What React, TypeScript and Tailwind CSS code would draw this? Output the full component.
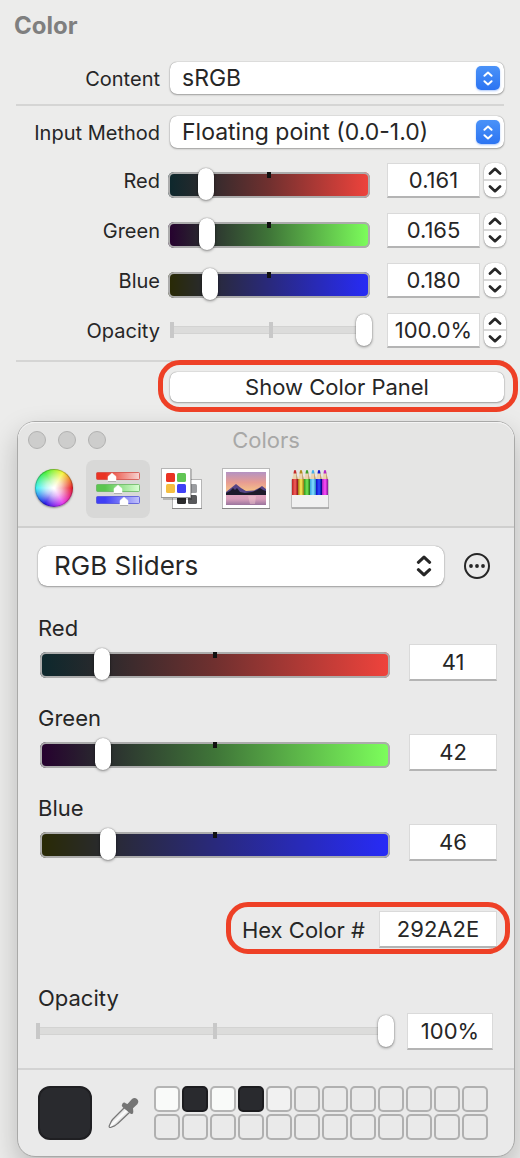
import { useState } from "react";
import type { ReactNode } from "react";

const TRACKS = {
  red: "[&::-webkit-slider-runnable-track]:bg-[linear-gradient(to_right,#0c282d,#29292c_17%,#70302f_50%,#f0433c)]",
  green: "[&::-webkit-slider-runnable-track]:bg-[linear-gradient(to_right,#26002f,#29292e_17%,#3f7538_50%,#7dff5c)]",
  blue: "[&::-webkit-slider-runnable-track]:bg-[linear-gradient(to_right,#292a04,#292a2e_18%,#29297c_50%,#272bf8)]",
};

const THUMB =
  "[&::-webkit-slider-thumb]:h-8 [&::-webkit-slider-thumb]:w-4 [&::-webkit-slider-thumb]:appearance-none [&::-webkit-slider-thumb]:rounded-full [&::-webkit-slider-thumb]:bg-white [&::-webkit-slider-thumb]:shadow-[0_0_1px_rgba(0,0,0,0.5),0_1px_3px_rgba(0,0,0,0.4)]";

type Hue = keyof typeof TRACKS;

function ColorSlider({ id, hue, max, step, value, onChange }: {
  id: string; hue: Hue; max: number; step: number; value: number; onChange: (v: number) => void;
}) {
  return (
    <div className="relative h-8 min-w-0 flex-1">
      <span className="absolute top-1 left-1/2 z-10 h-1.5 w-1 -translate-x-1/2 bg-[#111]" />
      <input
        id={id}
        type="range"
        min={0}
        max={max}
        step={step}
        value={value}
        onChange={(e) => onChange(Number(e.target.value))}
        className={`block h-[34px] w-full appearance-none bg-transparent [&::-webkit-slider-runnable-track]:h-[26px] [&::-webkit-slider-runnable-track]:rounded-md [&::-webkit-slider-runnable-track]:shadow-[inset_0_0_0_2px_#acacac] [&::-webkit-slider-thumb]:-mt-1 ${THUMB} ${TRACKS[hue]}`}
      />
    </div>
  );
}

function OpacitySlider({ id, value, onChange }: { id: string; value: number; onChange: (v: number) => void }) {
  return (
    <div className="relative h-8 min-w-0 flex-1">
      <span className="absolute inset-x-0 top-3 h-2 border-y border-[#d3d3d2] bg-[#dcdcdb]" />
      <span className="absolute top-2 left-0 h-4 w-1 bg-[#c8c8c8]" />
      <span className="absolute top-2 left-1/2 h-4 w-1 -translate-x-1/2 bg-[#c8c8c8]" />
      <input
        id={id}
        type="range"
        min={0}
        max={100}
        value={value}
        onChange={(e) => onChange(Number(e.target.value))}
        className={`relative block h-8 w-full appearance-none bg-transparent ${THUMB}`}
      />
    </div>
  );
}

function Field({ label, value, className }: { label: string; value: string; className: string }) {
  return (
    <input
      type="text"
      aria-label={label}
      value={value}
      readOnly
      className={`shrink-0 border border-b-2 border-[#dadada] border-b-[#b4b4b4] bg-white text-center text-[22px] text-[#262626] outline-none ${className}`}
    />
  );
}

function Chevron({ up, className }: { up?: boolean; className: string }) {
  return (
    <svg viewBox="0 0 14 8" className={className} fill="none" stroke="currentColor" strokeWidth="2.700" strokeLinecap="round" strokeLinejoin="round" aria-hidden="true">
      <path d={up ? "M2 6.5 7 1.8l5 4.7" : "M2 1.5l5 4.7 5-4.7"} />
    </svg>
  );
}

function Stepper({ label, onStep }: { label: string; onStep: (d: number) => void }) {
  return (
    <div className="ml-1 flex h-[34px] w-[22px] shrink-0 flex-col rounded-lg bg-white text-[#262626] shadow-[0_0_1px_rgba(0,0,0,0.4),0_1px_2px_rgba(0,0,0,0.3)]">
      <button type="button" aria-label={`Increase ${label}`} onClick={() => onStep(1)} className="flex flex-1 items-center justify-center border-b-2 border-[#d9d9d9]">
        <Chevron up className="h-2 w-3.5" />
      </button>
      <button type="button" aria-label={`Decrease ${label}`} onClick={() => onStep(-1)} className="flex flex-1 items-center justify-center">
        <Chevron className="h-2 w-3.5" />
      </button>
    </div>
  );
}

function PopUp({ id, options }: { id: string; options: string[] }) {
  return (
    <div className="relative min-w-0 flex-1">
      <select id={id} className="block h-8 w-full appearance-none rounded-[7px] bg-white pl-3 text-[23px] leading-8 text-[#262626] shadow-[0_0_1px_rgba(0,0,0,0.5),0_1px_2px_rgba(0,0,0,0.3)]">
        {options.map((o) => <option key={o}>{o}</option>)}
      </select>
      <span className="pointer-events-none absolute top-1 right-1 flex size-6 flex-col items-center justify-center gap-[3px] rounded-[5px] bg-linear-to-b from-[#4a92f8] to-[#2c74f2] text-white shadow-[0_1px_2px_rgba(44,116,242,0.4)]">
        <Chevron up className="h-1.5 w-2.5" />
        <Chevron className="h-1.5 w-2.5" />
      </span>
    </div>
  );
}

function FormRow({ id, label, className = "", children }: { id: string; label: string; className?: string; children: ReactNode }) {
  return (
    <div className={`flex items-center ${className}`}>
      <label htmlFor={id} className="w-36 shrink-0 pt-0.5 text-right text-xl leading-6">{label}</label>
      {children}
    </div>
  );
}

function WheelIcon() {
  return (
    <span className="relative mb-0.5 block size-[38px] rounded-full bg-[conic-gradient(from_90deg,#e8202c,#e53cf0,#2a1ce8,#3ff0f5,#46f03c,#f6f53c,#e8202c)] shadow-[0_1px_2px_rgba(0,0,0,0.4)]">
      <span className="absolute inset-0 rounded-full border border-black/25 bg-[radial-gradient(closest-side,white_5%,rgba(255,255,255,0.65)_45%,transparent_98%)]" />
    </span>
  );
}

function SlidersIcon() {
  const bars = [
    { y: 12, x: 26, a: "#ea3323", b: "#f6d5d3", s: "#d2463d" },
    { y: 24, x: 32, a: "#5bc650", b: "#daffd4", s: "#62b45b" },
    { y: 36, x: 38, a: "#3f3ff5", b: "#c3c3fa", s: "#4b4bd8" },
  ];
  return (
    <svg viewBox="0 0 64 58" className="h-[58px] w-16" aria-hidden="true">
      {bars.map((b, i) => (
        <g key={b.y}>
          <linearGradient id={`bar${i}`}>
            <stop offset="0.2" stopColor={b.a} />
            <stop offset="1" stopColor={b.b} />
          </linearGradient>
          <rect x="10.5" y={b.y + 0.5} width="43" height="7" rx="1" fill={`url(#bar${i})`} stroke={b.s} strokeOpacity="0.75" />
          <path d={`M${b.x - 4} ${b.y + 10}v-5l4-4 4 4v5z`} fill="#000" opacity="0.3" />
          <path d={`M${b.x - 4} ${b.y + 9}v-4.500l4-3.500 4 3.500v4.500z`} fill="#fff" stroke="#fff" strokeWidth="0.5" strokeLinejoin="round" />
        </g>
      ))}
    </svg>
  );
}

function PalettesIcon() {
  return (
    <svg viewBox="0 0 64 58" className="h-[58px] w-16" aria-hidden="true">
      <rect x="22.500" y="19.500" width="29" height="29" fill="#fff" stroke="#b5b5b5" />
      <path d="M22 48.500h30" stroke="#888" />
      <rect x="38" y="24" width="9" height="9" rx="1.500" fill="#9b9da0" />
      <rect x="27" y="35" width="9" height="9" rx="1.500" fill="#2c2c2c" />
      <rect x="38" y="35" width="9" height="9" rx="1.500" fill="#58595b" />
      <path d="M13 9h29v31H13z" fill="#000" opacity="0.2" />
      <rect x="11.500" y="8.500" width="29" height="29" fill="#fff" stroke="#b5b5b5" />
      <path d="M11 37.500h30" stroke="#999" />
      <rect x="16" y="13" width="9" height="9" rx="1.500" fill="#ea3323" />
      <rect x="27" y="13" width="9" height="9" rx="1.500" fill="#61c554" />
      <rect x="16" y="24" width="9" height="9" rx="1.500" fill="#f5bf42" />
      <rect x="27" y="24" width="9" height="9" rx="1.500" fill="#3f40f5" />
    </svg>
  );
}

function PictureIcon() {
  return (
    <svg viewBox="0 0 64 58" className="h-[58px] w-16" aria-hidden="true">
      <linearGradient id="sky" x2="0" y2="1">
        <stop stopColor="#b493c3" />
        <stop offset="0.450" stopColor="#e79c92" />
        <stop offset="1" stopColor="#fbd183" />
      </linearGradient>
      <linearGradient id="lake" x2="0" y2="1">
        <stop stopColor="#dfa3bd" />
        <stop offset="0.400" stopColor="#d99fbb" />
        <stop offset="1" stopColor="#9a749d" />
      </linearGradient>
      <rect x="8.500" y="8.500" width="47" height="40" fill="#fff" stroke="#b9b9b9" />
      <path d="M8 48.500h48" stroke="#858585" />
      <rect x="12" y="12" width="40" height="23" fill="url(#sky)" />
      <path d="M12 32 17 28l5-4 5 4 5 3 8-.500 5-2.500 3-2 4 3v6H12z" fill="#554486" />
      <path d="M12 33l4-2 3-3 2 2 2-2 3 4 5 1 7-1 5-2 3-2 3 2 3 1v4H12z" fill="#1d1a2b" />
      <rect x="12" y="35" width="40" height="10" fill="url(#lake)" />
      <path d="M34 36h8l-1 8h-5z" fill="#f4cbd0" opacity="0.450" />
    </svg>
  );
}

function PencilsIcon() {
  const pencils = [
    ["#c42b2b", "#e85350", "#9a1f22"],
    ["#b18b1c", "#efd94f", "#a68a1e"],
    ["#3c9f2b", "#66d84b", "#2d8423"],
    ["#44afe8", "#76d3fb", "#3793c8"],
    ["#1515cf", "#2743f6", "#0b0b94"],
    ["#b528c8", "#ee45ef", "#9420a8"],
  ];
  return (
    <svg viewBox="0 0 64 58" className="h-[58px] w-16" aria-hidden="true">
      <rect x="13.500" y="20" width="37" height="28" fill="#f0f0f0" stroke="#bebebe" />
      <path d="M14 48h37" stroke="#8b8b8b" />
      {pencils.map(([tip, body, edge], i) => {
        const x = 14 + i * 6;
        return (
          <g key={tip}>
            <path d={`M${x} 19.500 ${x + 2} 12h2l2 7.500z`} fill="#ecd3ae" />
            <path d={`M${x + 4} 12l2 7.500h-2z`} fill="#c5a57c" />
            <path d={`M${x + 1.5} 13.500 ${x + 2} 10.500q1-1 2 0l.500 3z`} fill={tip} />
            <rect x={x} y="19" width="6" height="16" fill={body} />
            <rect x={x} y="19" width="1.500" height="16" fill={tip} />
            <rect x={x + 4.5} y="19" width="1.500" height="16" fill={edge} />
          </g>
        );
      })}
    </svg>
  );
}

function Eyedropper() {
  return (
    <svg viewBox="0 0 34 34" className="size-[34px]" aria-hidden="true">
      <linearGradient id="glass" x1="0" y1="0" x2="1" y2="1">
        <stop offset="0.300" stopColor="#c4c4c4" />
        <stop offset="0.500" stopColor="#fff" />
        <stop offset="0.700" stopColor="#a8a8a8" />
      </linearGradient>
      <path d="M18.500 11.500 7 23q-1.500 1.500-2.500 4l-1.300 3q-.400 1.600 1.300 1.500l4-1.600q1.500-.700 3-2.200L24 16z" fill="url(#glass)" stroke="#777" strokeWidth="1.200" strokeLinejoin="round" />
      <path d="M16.500 7.500q1.500-2 3.500 0l1.500.500 4.500-5q2.500-2.200 5 0t.300 5.300l-4.300 4 .300 3.200q.300 3-2.300 2.500L16.500 11q-1.500-1.500 0-3.500z" fill="#757575" />
    </svg>
  );
}

const TOOLS = [
  { name: "Color Wheel", icon: <WheelIcon /> },
  { name: "Color Sliders", icon: <SlidersIcon /> },
  { name: "Color Palettes", icon: <PalettesIcon /> },
  { name: "Image Palettes", icon: <PictureIcon /> },
  { name: "Pencils", icon: <PencilsIcon /> },
];

const CHANNELS: { hue: Hue; label: string }[] = [
  { hue: "red", label: "Red" },
  { hue: "green", label: "Green" },
  { hue: "blue", label: "Blue" },
];

const SWATCHES: Record<number, string> = {
  0: "border-[#b4b4b4] bg-[#f9faf9]",
  1: "border-[#1c1c1f] bg-[#292a2e]",
  2: "border-[#b4b4b4] bg-[#f9faf9]",
  3: "border-[#1c1c1f] bg-[#292a2e]",
  4: "border-[#b0b0b0] bg-[#f1f1f1]",
};

const RING = "pointer-events-none absolute border-[5px] border-[#ee4026]";

export default function App() {
  const [rgb, setRgb] = useState({ red: 41, green: 42, blue: 46 });
  const [opacity, setOpacity] = useState(100);
  const [tool, setTool] = useState("Color Sliders");

  const clamp = (v: number, max: number) => Math.min(max, Math.max(0, Math.round(v)));
  const setHue = (hue: Hue, v: number) => setRgb((c) => ({ ...c, [hue]: clamp(v, 255) }));
  const hex = [rgb.red, rgb.green, rgb.blue].map((v) => v.toString(16).padStart(2, "0")).join("").toUpperCase();

  return (
    <main className="min-h-screen overflow-hidden bg-[#ececeb] pb-px font-['Inter',sans-serif] text-[#262626]">
      <section className="px-4 pt-2.5">
        <h1 className="-ml-0.5 text-2xl leading-8 font-bold text-[#7f7f7f]">Color</h1>
        <FormRow id="content" label="Content" className="mt-5 gap-2.5">
          <PopUp id="content" options={["sRGB", "Display P3"]} />
        </FormRow>
        <hr className="mt-2.5 h-0.5 border-0 bg-[#d5d5d4]" />
        <FormRow id="method" label="Input Method" className="mt-2.5 gap-2.5">
          <PopUp id="method" options={["Floating point (0.0-1.0)", "8-bit (0-255)"]} />
        </FormRow>

        <div className="mt-[7px] -mr-0.5">
          {CHANNELS.map(({ hue, label }) => (
            <FormRow key={hue} id={`top-${hue}`} label={label} className="h-[50px]">
              <div className="ml-2 flex min-w-0 flex-1 pt-2">
                <ColorSlider id={`top-${hue}`} hue={hue} max={255} step={1} value={rgb[hue]} onChange={(v) => setHue(hue, v)} />
              </div>
              <Field label={`${label} value`} value={(rgb[hue] / 255).toFixed(3)} className="ml-[17px] h-[35px] w-[93px]" />
              <Stepper label={label} onStep={(d) => setHue(hue, rgb[hue] + d)} />
            </FormRow>
          ))}
          <FormRow id="top-opacity" label="Opacity" className="h-[50px]">
            <div className="-mr-0.5 ml-2.5 flex min-w-0 flex-1">
              <OpacitySlider id="top-opacity" value={opacity} onChange={setOpacity} />
            </div>
            <Field label="Opacity value" value={`${opacity.toFixed(1)}%`} className="ml-[17px] h-[35px] w-[93px]" />
            <Stepper label="Opacity" onStep={(d) => setOpacity(clamp(opacity + d, 100))} />
          </FormRow>
        </div>

        <hr className="mt-[5px] h-0.5 border-0 bg-[#d5d5d4]" />
        <div className="relative mt-2.5 ml-[154px]">
          <button type="button" className="block h-[30px] w-full rounded-[7px] bg-white text-[22px] leading-[30px] shadow-[0_0_1px_rgba(0,0,0,0.5),0_1px_2px_rgba(0,0,0,0.3)]">
            Show Color Panel
          </button>
          <span className={`-top-3 -right-3.5 -bottom-2.5 -left-3 rounded-[22px] ${RING}`} />
        </div>
      </section>

      <section aria-label="Colors" className="mt-[19px] mr-[5px] ml-[17px] rounded-[18px] border border-[#a9a9a8] bg-[#eaeaea] shadow-[0_12px_28px_rgba(0,0,0,0.22)]">
        <header className="rounded-t-[17px] border-b-2 border-[#cfcfce] bg-[#e5e5e4] pb-2 pl-1 shadow-[inset_0_1px_0_#f4f4f4]">
          <div className="grid h-9 grid-cols-[1fr_auto_1fr] items-center pr-1">
            <div className="flex gap-3 pl-1.5">
              {["Close", "Minimize", "Zoom"].map((n) => (
                <button key={n} type="button" aria-label={n} className="size-[18px] rounded-full border border-[#b2b2b1] bg-[#cdcdcc]" />
              ))}
            </div>
            <h2 className="text-[22px] leading-7 text-[#a8a8a7]">Colors</h2>
          </div>
          <div className="mt-0.5 flex">
            {TOOLS.map((t) => (
              <button
                key={t.name}
                type="button"
                aria-label={t.name}
                aria-pressed={tool === t.name}
                onClick={() => setTool(t.name)}
                className={`flex h-[58px] w-16 items-center justify-center rounded-lg ${tool === t.name ? "bg-[#d8d8d7]" : ""}`}
              >
                {t.icon}
              </button>
            ))}
          </div>
        </header>

        <div className="pt-[18px] pr-[17px] pb-[19px] pl-5">
          <div className="flex items-center gap-5 pr-[7px]">
            <div className="relative min-w-0 flex-1">
              <select aria-label="Slider type" className="block h-10 w-full appearance-none rounded-[9px] bg-white pl-4 text-[26px] leading-10 text-[#262626] shadow-[0_0_1px_rgba(0,0,0,0.5),0_1px_2px_rgba(0,0,0,0.3)]">
                <option>RGB Sliders</option>
                <option>Grayscale Slider</option>
              </select>
              <span className="pointer-events-none absolute inset-y-0 right-3 flex flex-col items-center justify-center gap-1">
                <Chevron up className="h-[9px] w-4" />
                <Chevron className="h-[9px] w-4" />
              </span>
            </div>
            <button type="button" aria-label="More options" className="size-[26px] shrink-0">
              <svg viewBox="0 0 26 26" className="size-[26px]" aria-hidden="true">
                <circle cx="13" cy="13" r="12" fill="none" stroke="#262626" strokeWidth="2" />
                <circle cx="7" cy="13" r="1.900" fill="#262626" />
                <circle cx="13" cy="13" r="1.900" fill="#262626" />
                <circle cx="19" cy="13" r="1.900" fill="#262626" />
              </svg>
            </button>
          </div>

          <div className="mt-[30px] flex flex-col gap-[26px]">
            {CHANNELS.map(({ hue, label }) => (
              <div key={hue}>
                <label htmlFor={`panel-${hue}`} className="block text-[22px] leading-6">{label}</label>
                <div className="mt-1 flex h-9 items-center">
                  <div className="ml-0.5 flex min-w-0 flex-1 pt-1">
                    <ColorSlider id={`panel-${hue}`} hue={hue} max={255} step={1} value={rgb[hue]} onChange={(v) => setHue(hue, v)} />
                  </div>
                  <Field label={`${label} level`} value={String(rgb[hue])} className="ml-[19px] h-[37px] w-[88px]" />
                </div>
              </div>
            ))}
          </div>

          <div className="mt-[51px] flex justify-end">
            <div className="relative flex h-9 items-center">
              <span className="pt-0.5 text-[22px]">Hex Color #</span>
              <Field label="Hex Color #" value={hex} className="ml-3.5 h-[37px] w-[118px]" />
              <span className={`-top-[9px] -right-[13px] -bottom-[7px] -left-4 rounded-[22px] ${RING}`} />
            </div>
          </div>

          <div className="mt-[39px]">
            <label htmlFor="panel-opacity" className="block text-[22px] leading-6">Opacity</label>
            <div className="mt-[3px] mr-1 -ml-0.5 flex h-9 items-center">
              <OpacitySlider id="panel-opacity" value={opacity} onChange={setOpacity} />
              <Field label="Opacity level" value={`${opacity}%`} className="ml-[13px] h-[37px] w-[86px]" />
            </div>
          </div>
        </div>

        <footer className="flex items-center gap-3.5 border-t-2 border-[#d3d3d3] py-4 pl-5">
          <span className="size-[54px] shrink-0 rounded-xl border-2 border-[#1f1f22] bg-[#292a2e]" />
          <button type="button" aria-label="Pick a color from the screen"><Eyedropper /></button>
          <div className="grid grid-cols-[repeat(12,26px)] gap-0.5">
            {Array.from({ length: 24 }, (_, i) => (
              <button key={i} type="button" aria-label={`Swatch ${i + 1}`} className={`size-[26px] rounded-[5px] border-2 ${SWATCHES[i] ?? "border-[#b0b0b0]"}`} />
            ))}
          </div>
        </footer>
      </section>
    </main>
  );
}
